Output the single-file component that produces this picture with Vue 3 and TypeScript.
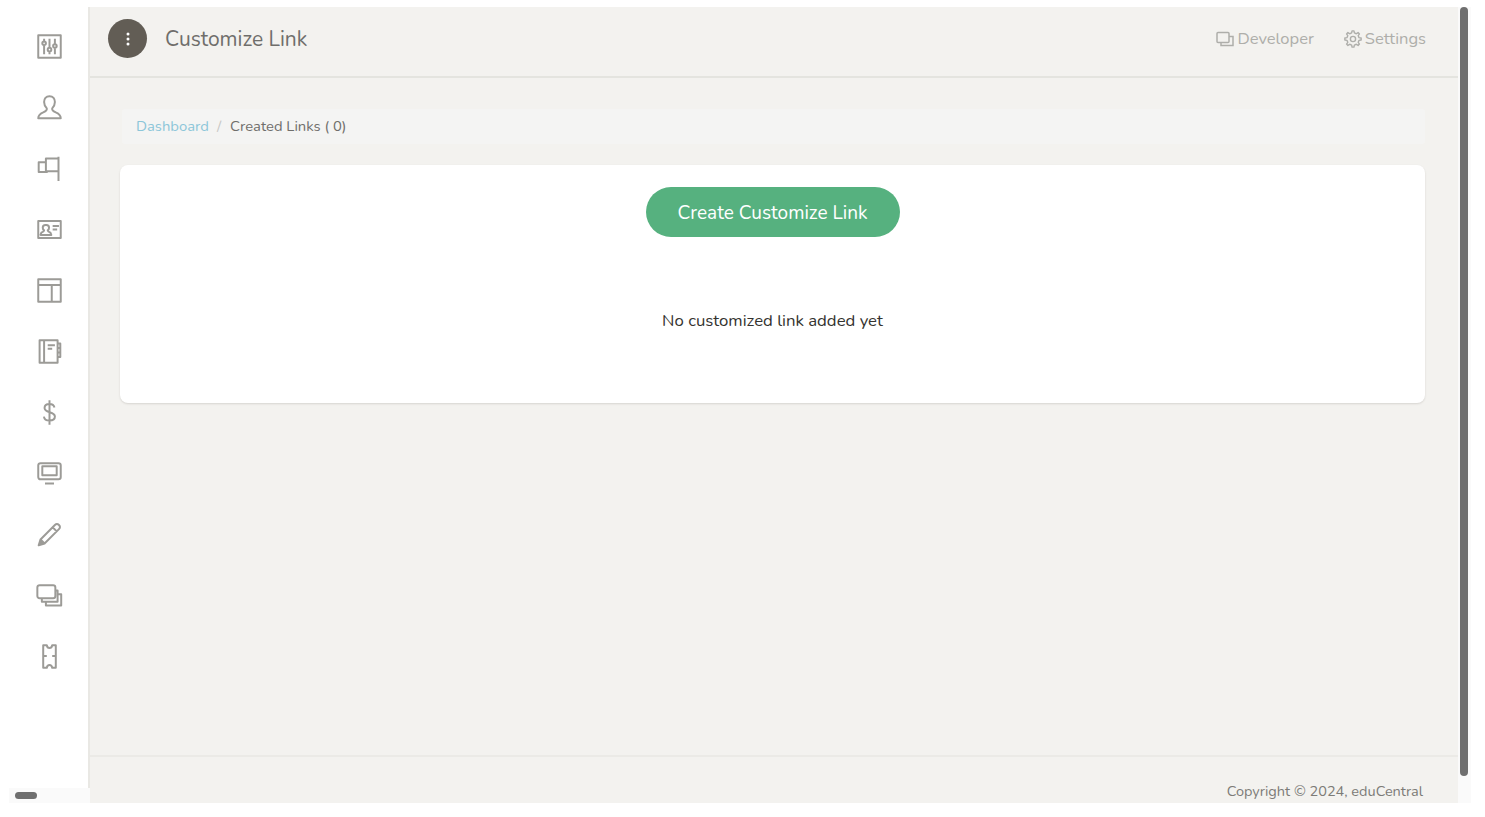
<script setup lang="ts">
const navIcons: string[] = [
  'M2.500 2.500h25v25h-25z M9 6.500v3 M9 13.500v10 M15 6.500v10 M15 20.500v3 M21 6.500v6 M21 16.500v7 M7 11.500a2 2 0 1 0 4 0a2 2 0 1 0-4 0z M13 18.500a2 2 0 1 0 4 0a2 2 0 1 0-4 0z M19 14.500a2 2 0 1 0 4 0a2 2 0 1 0-4 0z',
  'M15 2.500c-4 0-6 3-6 6.500 0 3 1.500 5.500 3 7 .5 2-1 3-4 4.500-3 1.300-5.500 3-5.500 6.500h25c0-3.500-2.500-5.200-5.500-6.500-3-1.500-4.500-2.500-4-4.500 1.500-1.500 3-4 3-7 0-3.500-2-6.500-6-6.500z',
  'M25 2v27 M25 4H11v14h14 M11 8H3v11h10',
  'M2.500 5.500h25v19h-25z M10.500 10c-2 0-3 1.500-3 3 0 1.500.7 2.500 1.500 3 0 1-1 1.500-3 2.500l-1 2.500h12l-1-2.500c-2-1-3-1.500-3-2.500.8-.5 1.500-1.500 1.500-3 0-1.500-1-3-3-3z M18.500 11h7 M18.500 15h5',
  'M2.500 2.500h25v25h-25z M2.500 9h25 M17.500 9v18.500',
  'M4 2.500h20v25H4z M9 2.500v25 M13 8h8 M13 12h5 M24 6h3v5h-3 M24 11h3v5h-3 M24 16h3v5h-3',
  'M20.500 9.500c-.5-2.500-2.500-4-5.500-4-3.500 0-5.500 2-5.500 4.500 0 6 11.500 3.500 11.500 9.500 0 2.800-2.500 4.500-6 4.500-3.500 0-5.800-1.800-6.200-4.500 M15 1.500v27',
  'M5 3.500h20c1.500 0 2.500 1 2.500 2.500v13c0 1.500-1 2.500-2.500 2.500H5c-1.500 0-2.500-1-2.500-2.500V6c0-1.500 1-2.500 2.500-2.500z M7 7h16v10H7z M10 26h10',
  'M5 20.500 21 4.500c1.500-1.500 3-1.500 4.500 0s1.500 3 0 4.500L9.500 25l-6.500 2z M18.500 7l4.500 4.500 M5 20.500l4.500 4.500 M3 27l1.500-4 2.500 2.500z',
  'M4 3.500h15c1.500 0 2.500 1 2.500 2.500v9.500c0 1.500-1 2.500-2.500 2.500H4c-1.500 0-2.500-1-2.500-2.500V6c0-1.500 1-2.500 2.500-2.500z M6.500 18v4h17.500V9.500h-2.500 M11 22v4h17V13.500h-4',
  'M8 2.500h4c.3 2 1.300 3 3 3s2.700-1 3-3h4v25h-4c-.3-2-1.300-3-3-3s-2.700 1-3 3H8z M8 14.500h4 M18 14.500h4',
]

// Eight-toothed gear outline for the Settings link.
const teeth = 8
const gearPoints: string[] = []
for (let i = 0; i < teeth; i++) {
  const base = (i / teeth) * Math.PI * 2
  const step = (Math.PI * 2) / teeth
  for (const [offset, radius] of [[-0.28, 6.2], [-0.15, 8.2], [0.15, 8.2], [0.28, 6.2]] as const) {
    const angle = base + offset * step
    gearPoints.push(`${(9 + radius * Math.cos(angle)).toFixed(2)},${(9 + radius * Math.sin(angle)).toFixed(2)}`)
  }
}
const gearOutline = gearPoints.join(' ')
</script>

<template>
  <div class="page">
    <div class="frame">
      <aside class="sidebar">
        <div v-for="(d, i) in navIcons" :key="i" class="nav-item">
          <svg class="nav-icon" viewBox="0 0 30 30" fill="none" stroke="currentColor" stroke-width="2.200" stroke-linejoin="round">
            <path :d="d" />
          </svg>
        </div>
        <div class="h-scroll"><span class="h-thumb"></span></div>
      </aside>
      <main class="main">
        <header class="topbar">
          <div class="left">
            <span class="menu-btn">
              <svg viewBox="0 0 4 14" width="4" height="14" fill="#fff"><circle cx="2" cy="2" r="1.500"/><circle cx="2" cy="7" r="1.500"/><circle cx="2" cy="12" r="1.500"/></svg>
            </span>
            <h1 class="title">Customize Link</h1>
          </div>
          <nav class="links">
            <a class="link">
              <svg viewBox="0 0 18 16" width="18" height="16" fill="none" stroke="currentColor" stroke-width="1.500"><rect x="1" y="1.500" width="12" height="10" rx="1"/><path d="M5 11.500v3h12v-9h-4"/></svg>
              <span>Developer</span>
            </a>
            <a class="link">
              <svg viewBox="0 0 18 18" width="18" height="18" fill="none" stroke="currentColor" stroke-width="1.400" stroke-linejoin="round"><circle cx="9" cy="9" r="2.600"/><polygon :points="gearOutline" /></svg>
              <span>Settings</span>
            </a>
          </nav>
        </header>
        <section class="content">
          <div class="crumbs">
            <a class="crumb-link">Dashboard</a>
            <span class="sep">/</span>
            <span class="crumb-current">Created Links ( 0)</span>
          </div>
          <div class="card">
            <button class="create" type="button">Create Customize Link</button>
            <p class="empty">No customized link added yet</p>
          </div>
        </section>
        <footer class="footer">Copyright © 2024, eduCentral</footer>
      </main>
      <div class="v-scroll"><span class="v-thumb"></span></div>
    </div>
  </div>
</template>

<style>
html, body { margin: 0; background: #fff; }
</style>

<style scoped>
.page {
  height: 817px;
  box-sizing: border-box;
  padding: 7px 14px 14px 9px;
  font-family: "Nunito", "Lato", "Liberation Sans", sans-serif;
  overflow: hidden;
}
.frame {
  display: flex;
  height: 796px;
  position: relative;
}
.sidebar {
  width: 81px;
  flex: none;
  box-sizing: border-box;
  padding: 9px 0 0 2px;
  background: #fff;
  color: #9c9b97;
  border-right: 2px solid #e9e8e4;
  display: flex;
  flex-direction: column;
  align-items: center;
}
.nav-item {
  height: 61px;
  width: 100%;
  display: flex;
  align-items: center;
  justify-content: center;
  flex: none;
}
.nav-icon { width: 27px; height: 27px; }
.h-scroll {
  position: absolute;
  left: 0;
  bottom: 0;
  width: 81px;
  height: 15px;
  background: #fafafa;
  display: flex;
  align-items: center;
}
.h-thumb {
  width: 22px;
  height: 7px;
  margin-left: 6px;
  border-radius: 4px;
  background: #6f6f6f;
}
.main {
  flex: 1;
  min-width: 0;
  background: #f3f2ef;
  display: flex;
  flex-direction: column;
}
.topbar {
  height: 71px;
  flex: none;
  box-sizing: border-box;
  border-bottom: 2px solid #e4e4df;
  display: flex;
  align-items: center;
  justify-content: space-between;
  padding: 0 32px 6px 18px;
}
.left { display: flex; align-items: center; gap: 18px; }
.menu-btn {
  width: 39px;
  height: 39px;
  border-radius: 50%;
  background: #625d55;
  display: flex;
  align-items: center;
  justify-content: center;
}
.title {
  margin: 0;
  font-size: 21px;
  font-weight: 400;
  color: #6f6e6b;
}
.links { display: flex; gap: 30px; }
.link {
  display: flex;
  align-items: center;
  gap: 3px;
  font-size: 16.500px;
  color: #aeaeaa;
}
.content {
  flex: 1;
  padding: 31px 33px 0 30px;
  display: flex;
  flex-direction: column;
  gap: 21px;
}
.crumbs {
  margin-left: 2px;
  height: 35px;
  box-sizing: border-box;
  background: #f4f4f3;
  border-radius: 3px;
  padding: 0 0 1px 14px;
  display: flex;
  align-items: center;
  gap: 8px;
  font-size: 14.800px;
}
.crumb-link { color: #8cc6d9; }
.sep { color: #c8c8c5; }
.crumb-current { color: #6f6e6b; margin-left: 1px; }
.card {
  height: 238px;
  box-sizing: border-box;
  background: #fff;
  border-radius: 8px;
  box-shadow: 0 1px 2px rgba(90, 85, 70, .18);
  padding-top: 22px;
  display: flex;
  flex-direction: column;
  align-items: center;
}
.create {
  width: 254px;
  height: 50px;
  border: 0;
  border-radius: 25px;
  background: #56b17f;
  color: #fff;
  font: inherit;
  font-size: 19px;
  padding: 1px 0 0;
}
.empty {
  margin: 73px 0 0;
  font-size: 16.750px;
  line-height: 22px;
  color: #34332f;
}
.footer {
  height: 48px;
  flex: none;
  box-sizing: border-box;
  border-top: 2px solid #ebeae6;
  padding: 24px 35px 0 0;
  text-align: right;
  font-size: 14.500px;
  line-height: 20px;
  color: #7c7b77;
}
.v-scroll {
  width: 13px;
  flex: none;
  background: #fafafa;
}
.v-thumb {
  display: block;
  width: 8px;
  height: 769px;
  margin-left: 2px;
  border-radius: 4px;
  background: #6f6f6f;
}
</style>
